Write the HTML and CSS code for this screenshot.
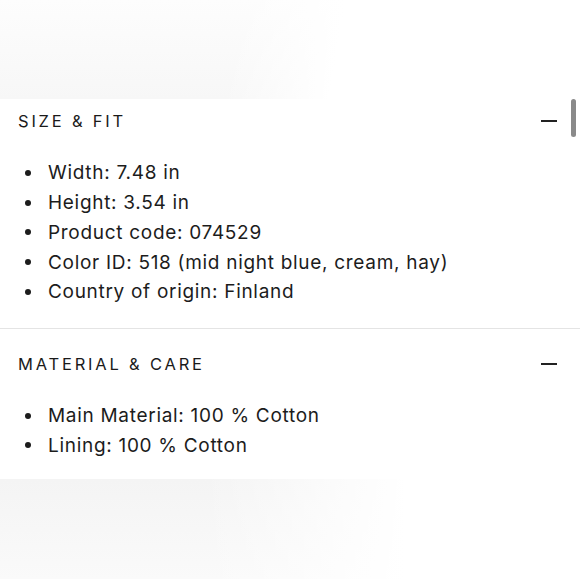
FILE: index.html
```html
<!DOCTYPE html>
<html>
<head>
<meta charset="utf-8">
<link rel="stylesheet" href="styles.css">
</head>
<body>
<div class="top-band"></div>
<main class="panel">
  <section class="acc acc-first">
    <div class="acc-head">
      <h2 class="acc-title">SIZE &amp; FIT</h2>
      <span class="minus"></span>
    </div>
    <ul class="specs">
      <li>Width: 7.48 in</li>
      <li>Height: 3.54 in</li>
      <li>Product code: 074529</li>
      <li>Color ID: 518 (mid night blue, cream, hay)</li>
      <li>Country of origin: Finland</li>
    </ul>
  </section>
  <section class="acc acc-second">
    <div class="acc-head">
      <h2 class="acc-title">MATERIAL &amp; CARE</h2>
      <span class="minus"></span>
    </div>
    <ul class="specs">
      <li>Main Material: 100 % Cotton</li>
      <li>Lining: 100 % Cotton</li>
    </ul>
  </section>
  <div class="scrollbar"></div>
</main>
<div class="bottom-band"></div>
</body>
</html>
```
FILE: styles.css
```css
html, body {
  margin: 0;
  padding: 0;
  background: #fff;
}
body {
  width: 580px;
  height: 580px;
  overflow: hidden;
  font-family: "Inter", "Liberation Sans", sans-serif;
  color: #1c1c1c;
}
.top-band {
  height: 99px;
  background:
    linear-gradient(100deg, rgba(255,255,255,0) 0%, rgba(255,255,255,0) 40%, #fff 58%),
    linear-gradient(180deg, #fdfdfd 0%, #f7f7f7 100%);
}
.panel {
  position: relative;
  background: #fff;
}
.acc-head {
  display: flex;
  align-items: center;
  justify-content: space-between;
  height: 44px;
  padding: 0 23px 0 18px;
}
.acc-title {
  margin: 0;
  font-size: 16.5px;
  font-weight: 400;
  letter-spacing: 2.8px;
  color: #1a1a1a;
}
.minus {
  width: 16px;
  height: 2px;
  background: #222;
}
.specs {
  list-style: none;
  margin: 15px 0 0;
  padding: 0;
}
.specs li {
  display: flex;
  align-items: center;
  height: 29.75px;
  font-size: 19px;
  letter-spacing: 0.7px;
  color: #1c1c1c;
}
.specs li::before {
  content: "";
  width: 6px;
  height: 6px;
  border-radius: 50%;
  background: #1c1c1c;
  margin: 0 17px 0 25px;
  flex: none;
}
.acc-first {
  padding-bottom: 21px;
  border-bottom: 1px solid #e4e4e4;
}
.acc-second {
  padding-top: 13px;
  padding-bottom: 19px;
}
.scrollbar {
  position: absolute;
  right: 4px;
  top: 0;
  width: 5px;
  height: 38px;
  border-radius: 3px;
  background: #8a8a8a;
}
.bottom-band {
  height: 100px;
  background:
    linear-gradient(90deg, rgba(255,255,255,0) 0%, rgba(255,255,255,0) 35%, #fff 70%),
    linear-gradient(180deg, #f4f4f4 0%, #fafafa 100%);
}
```
